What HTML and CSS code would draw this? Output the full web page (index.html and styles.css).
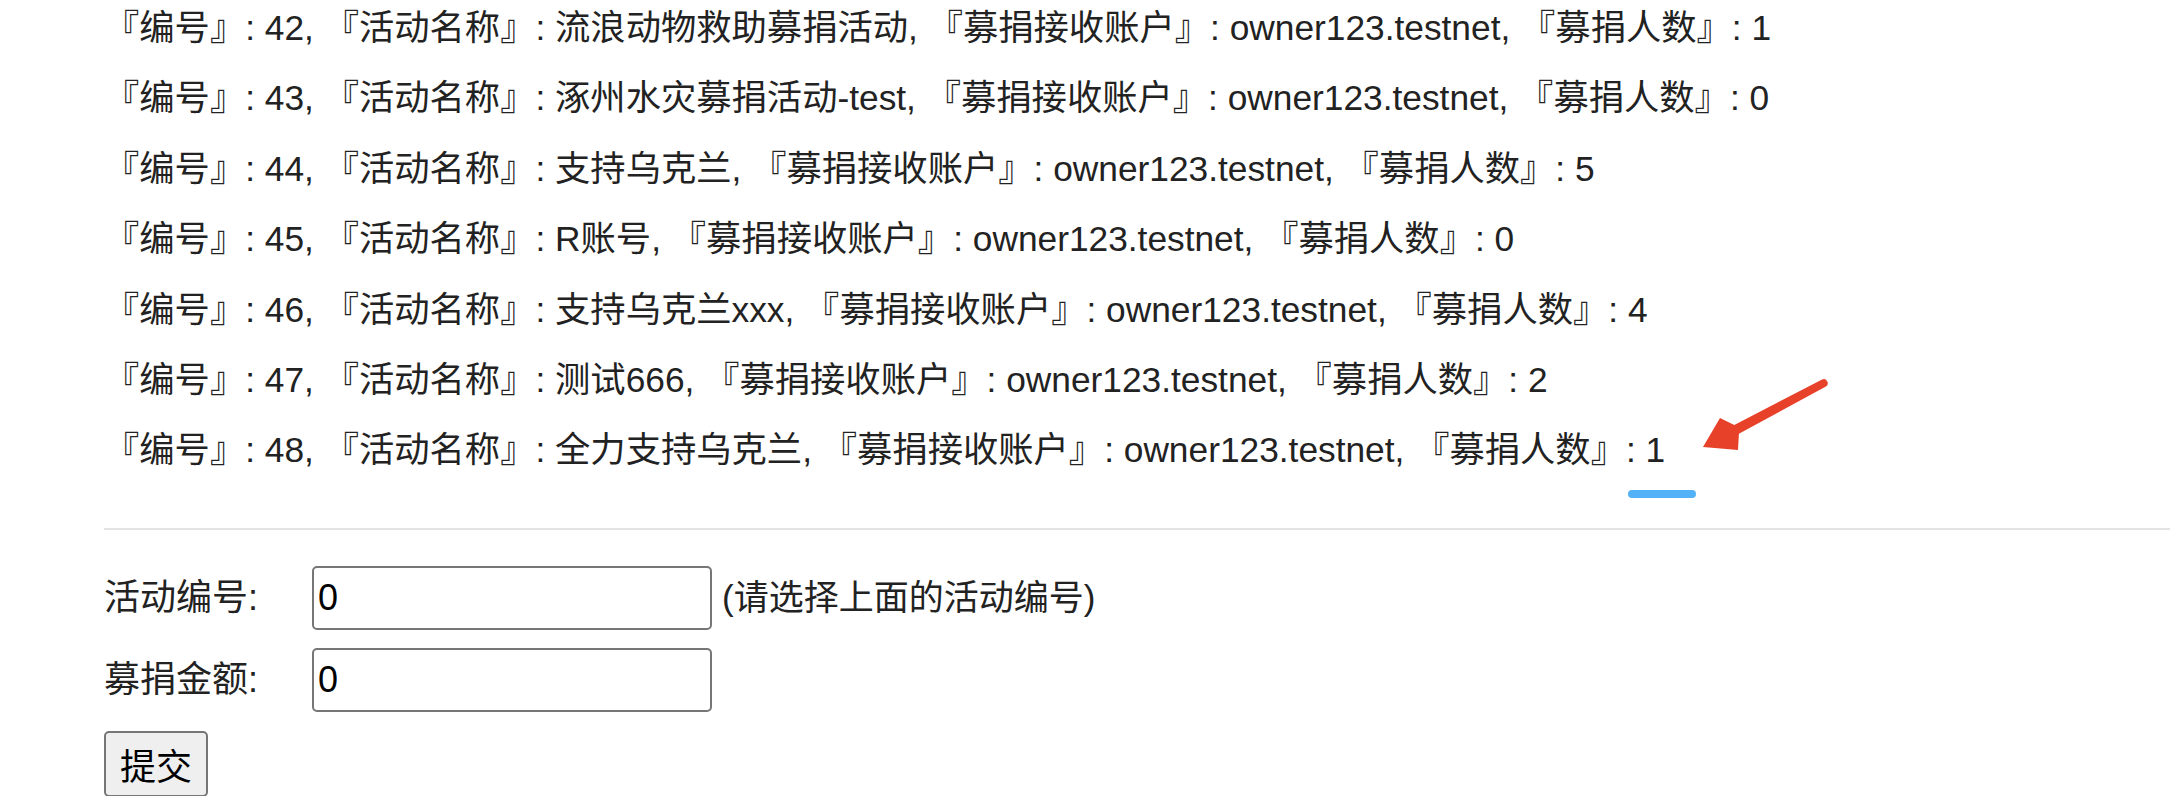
FILE: index.html
```html
<!DOCTYPE html>
<html lang="zh-CN">
<head>
<meta charset="utf-8">
<title>募捐活动</title>
<link rel="stylesheet" href="styles.css">
</head>
<body>
<div class="page">
  <div class="list">
    <p class="item">『编号』: 42, 『活动名称』: 流浪动物救助募捐活动, 『募捐接收账户』: owner123.testnet, 『募捐人数』: 1</p>
    <p class="item">『编号』: 43, 『活动名称』: 涿州水灾募捐活动-test, 『募捐接收账户』: owner123.testnet, 『募捐人数』: 0</p>
    <p class="item">『编号』: 44, 『活动名称』: 支持乌克兰, 『募捐接收账户』: owner123.testnet, 『募捐人数』: 5</p>
    <p class="item">『编号』: 45, 『活动名称』: R账号, 『募捐接收账户』: owner123.testnet, 『募捐人数』: 0</p>
    <p class="item">『编号』: 46, 『活动名称』: 支持乌克兰xxx, 『募捐接收账户』: owner123.testnet, 『募捐人数』: 4</p>
    <p class="item">『编号』: 47, 『活动名称』: 测试666, 『募捐接收账户』: owner123.testnet, 『募捐人数』: 2</p>
    <p class="item">『编号』: 48, 『活动名称』: 全力支持乌克兰, 『募捐接收账户』: owner123.testnet, 『募捐人数』: 1</p>
  </div>
  <hr class="divider">
  <form class="form">
    <div class="row">
      <label class="label">活动编号:</label>
      <input class="field" type="text" value="0">
      <span class="hint">(请选择上面的活动编号)</span>
    </div>
    <div class="row">
      <label class="label">募捐金额:</label>
      <input class="field" type="text" value="0">
    </div>
    <button class="submit" type="button">提交</button>
  </form>
</div>
<div class="underline"></div>
<svg class="arrow" width="2170" height="796" viewBox="0 0 2170 796">
  <path d="M1703 447 L1720 418 L1734.3 425 L1822.1 379.5 A4 4 0 0 1 1825.9 386.5 L1738.9 433.8 L1738 450 Z" fill="#e8412a"/>
</svg>
</body>
</html>
```

FILE: styles.css
```css
html, body {
  margin: 0;
  padding: 0;
  background: #ffffff;
}

body {
  width: 2170px;
  height: 796px;
  overflow: hidden;
  position: relative;
  font-family: "Liberation Sans", "Noto Sans CJK SC", sans-serif;
  color: #222222;
  text-spacing-trim: space-all;
}

.page {
  padding-left: 104px;
}

.list {
  display: flex;
  flex-direction: column;
  gap: 30.4px;
  padding-top: 8px;
}

.item {
  margin: 0;
  font-family: "Liberation Sans", "Noto Sans CJK SC", sans-serif;
  font-size: 35.3px;
  line-height: 40px;
  height: 40px;
  white-space: nowrap;
}

.divider {
  margin: 58px 0 0 0;
  border: 0;
  height: 2px;
  background: #e3e3e3;
}

.form {
  display: flex;
  flex-direction: column;
  align-items: flex-start;
  padding-top: 36px;
  gap: 18px;
  font-family: "Liberation Sans", "Noto Sans CJK SC", sans-serif;
  color: #222222;
}

.row {
  display: flex;
  align-items: center;
}

.label {
  width: 208px;
  font-size: 36px;
  line-height: 40px;
}

.field {
  box-sizing: border-box;
  width: 400px;
  height: 64px;
  border: 2px solid #767676;
  border-radius: 5px;
  padding: 0 4px;
  font-family: "Liberation Sans", sans-serif;
  font-size: 36px;
  color: #000000;
  background: #ffffff;
}

.hint {
  margin-left: 10px;
  font-size: 35px;
  line-height: 40px;
}

.submit {
  margin-top: 1px;
  box-sizing: border-box;
  width: 104px;
  height: 66px;
  padding: 0;
  border: 2px solid #767676;
  border-radius: 5px;
  background: #efefef;
  font-family: "Noto Sans CJK SC", sans-serif;
  font-size: 36px;
  color: #000000;
}

.underline {
  position: absolute;
  left: 1628px;
  top: 490px;
  width: 68px;
  height: 8px;
  border-radius: 4px;
  background: #53b2f7;
}

.arrow {
  position: absolute;
  left: 0;
  top: 0;
  pointer-events: none;
}
```
